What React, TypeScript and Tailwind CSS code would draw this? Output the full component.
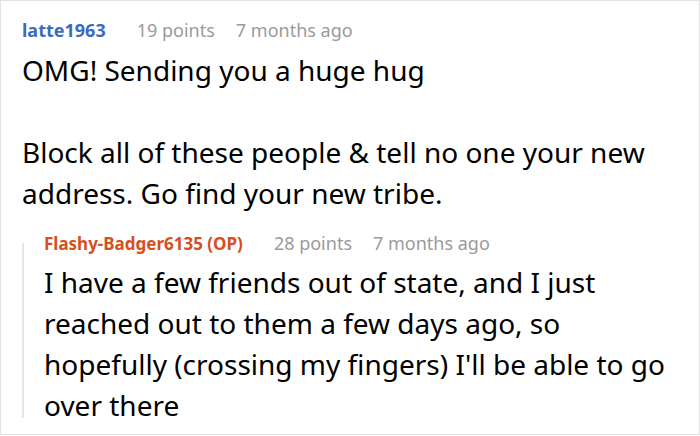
import React from 'react';

interface MetaProps {
  author: string;
  points: number;
  age: string;
  op?: boolean;
}

function CommentMeta({ author, points, age, op }: MetaProps) {
  return (
    <div className="flex items-baseline leading-[24px] whitespace-nowrap">
      {op ? (
        <span className="font-bold text-[17px] text-[#d4501e]">{author} (OP)</span>
      ) : (
        <span className="font-bold text-[18px] text-[#3a6cbf]">{author}</span>
      )}
      <span className="ml-[31px] text-[18px] text-[#9a9a9a]">{points} points</span>
      <span className="ml-[21px] text-[18px] text-[#9a9a9a]">{age}</span>
    </div>
  );
}

export default function App() {
  return (
    <div
      className="w-[700px] h-[435px] bg-white border border-[#e2e2e2] overflow-hidden text-black"
      style={{ fontFamily: '"Noto Sans", "Open Sans", sans-serif' }}
    >
      <div className="pl-[21px] pr-4 pt-[17px]">
        <CommentMeta author="latte1963" points={19} age="7 months ago" />
        <div className="mt-[8px] text-[28px] leading-[41px] whitespace-nowrap">
          <p>OMG! Sending you a huge hug</p>
          <p>&nbsp;</p>
          <p>
            Block all of these people &amp; tell no one your new
            <br />
            address. Go find your new tribe.
          </p>
        </div>

        <div className="mt-[17px] flex">
          <div className="w-[2px] mt-[12px] mb-[8px] bg-[#e6e6e6] shrink-0" />
          <div className="pl-[20px]">
            <CommentMeta author="Flashy-Badger6135" points={28} age="7 months ago" op />
            <p className="mt-[6px] text-[28px] leading-[41px] whitespace-nowrap">
              I have a few friends out of state, and I just
              <br />
              reached out to them a few days ago, so
              <br />
              hopefully (crossing my fingers) I'll be able to go
              <br />
              over there
            </p>
          </div>
        </div>
      </div>
    </div>
  );
}
